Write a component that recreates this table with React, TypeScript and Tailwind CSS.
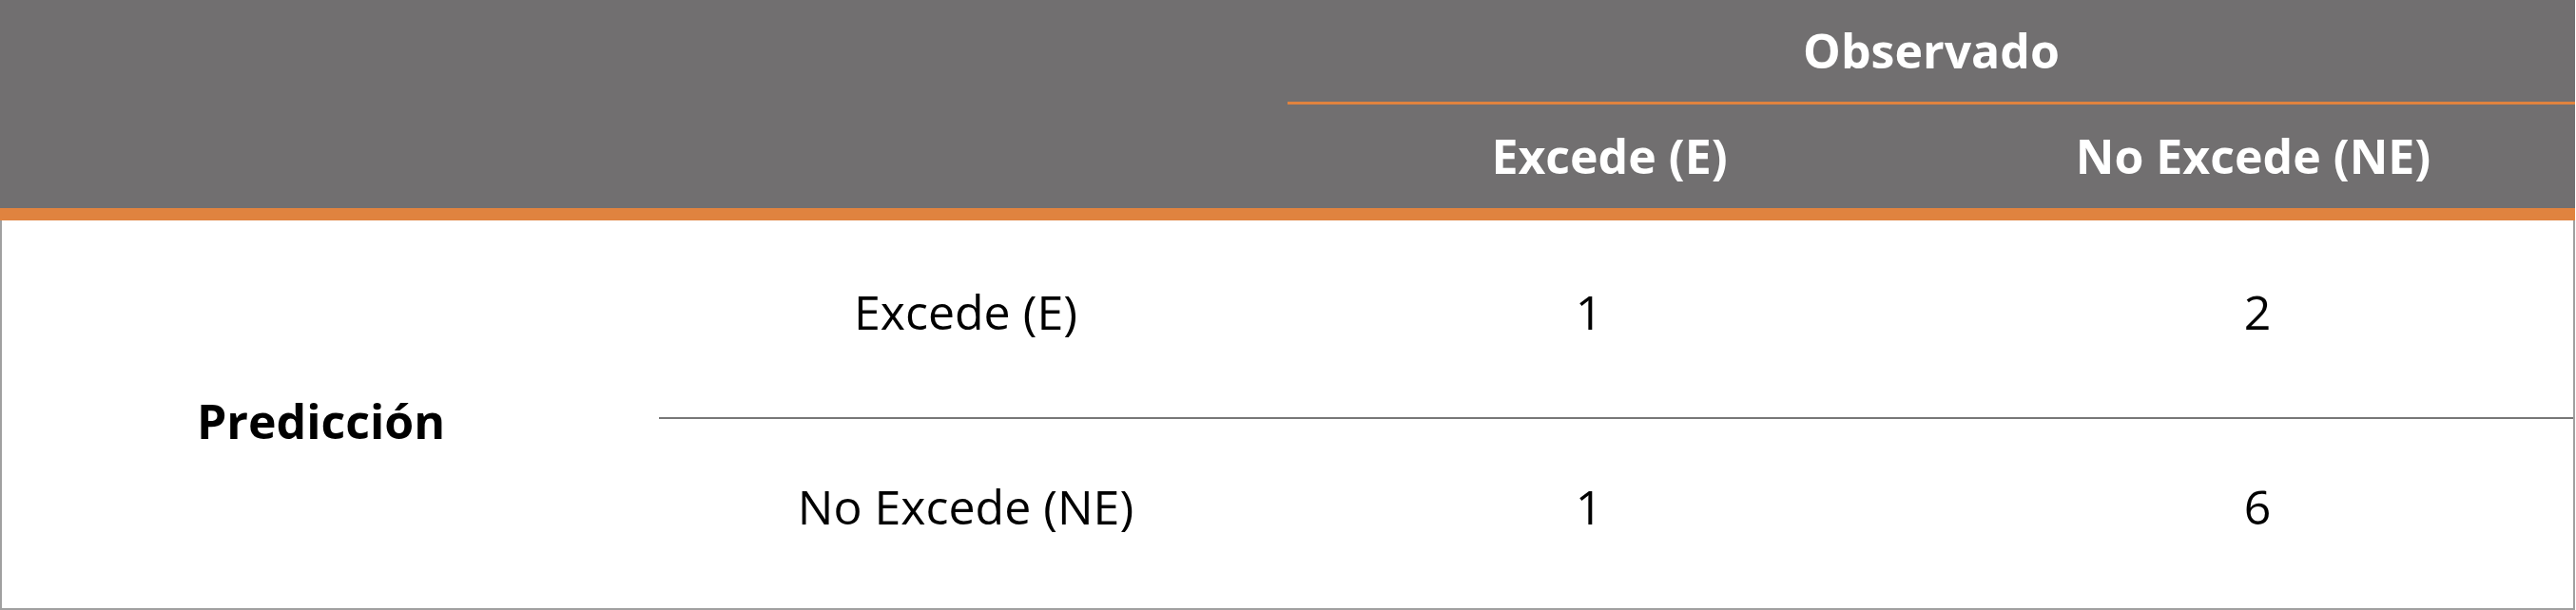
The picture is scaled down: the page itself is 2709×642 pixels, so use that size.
export default function App() {
  const font = { fontFamily: '"Open Sans", "Noto Sans", sans-serif' };
  return (
    <div className="w-[2708px] bg-white text-black" style={font}>
      {/* header */}
      <div className="flex h-[219px] bg-[#716f70] text-white font-bold text-[50px]">
        <div className="w-[1354px]" />
        <div className="flex flex-1 flex-col">
          <div className="flex h-[107px] items-center justify-center">Observado</div>
          <div className="h-[3px] bg-[#e0833f]" />
          <div className="flex flex-1">
            <div className="flex w-1/2 items-center justify-center">Excede (E)</div>
            <div className="flex w-1/2 items-center justify-center">No Excede (NE)</div>
          </div>
        </div>
      </div>
      <div className="h-[13px] bg-[#e0833f]" />

      {/* body */}
      <div className="flex h-[410px] border-x-2 border-b-2 border-[#a0a0a0] text-[50px]">
        <div className="flex w-[691px] items-center justify-center pr-[20px] pt-[14px] font-bold">
          Predicción
        </div>
        <div className="flex flex-1 flex-col">
          <div className="flex h-[207px] pb-[14px]">
            <div className="flex w-[661px] items-center justify-center pr-[16px]">Excede (E)</div>
            <div className="flex w-[676px] items-center justify-center pr-[42px]">1</div>
            <div className="flex flex-1 items-center justify-center pl-[12px]">2</div>
          </div>
          <div className="h-[2px] bg-[#777777]" />
          <div className="flex flex-1 pb-[14px]">
            <div className="flex w-[661px] items-center justify-center pr-[16px]">No Excede (NE)</div>
            <div className="flex w-[676px] items-center justify-center pr-[42px]">1</div>
            <div className="flex flex-1 items-center justify-center pl-[12px]">6</div>
          </div>
        </div>
      </div>
    </div>
  );
}
